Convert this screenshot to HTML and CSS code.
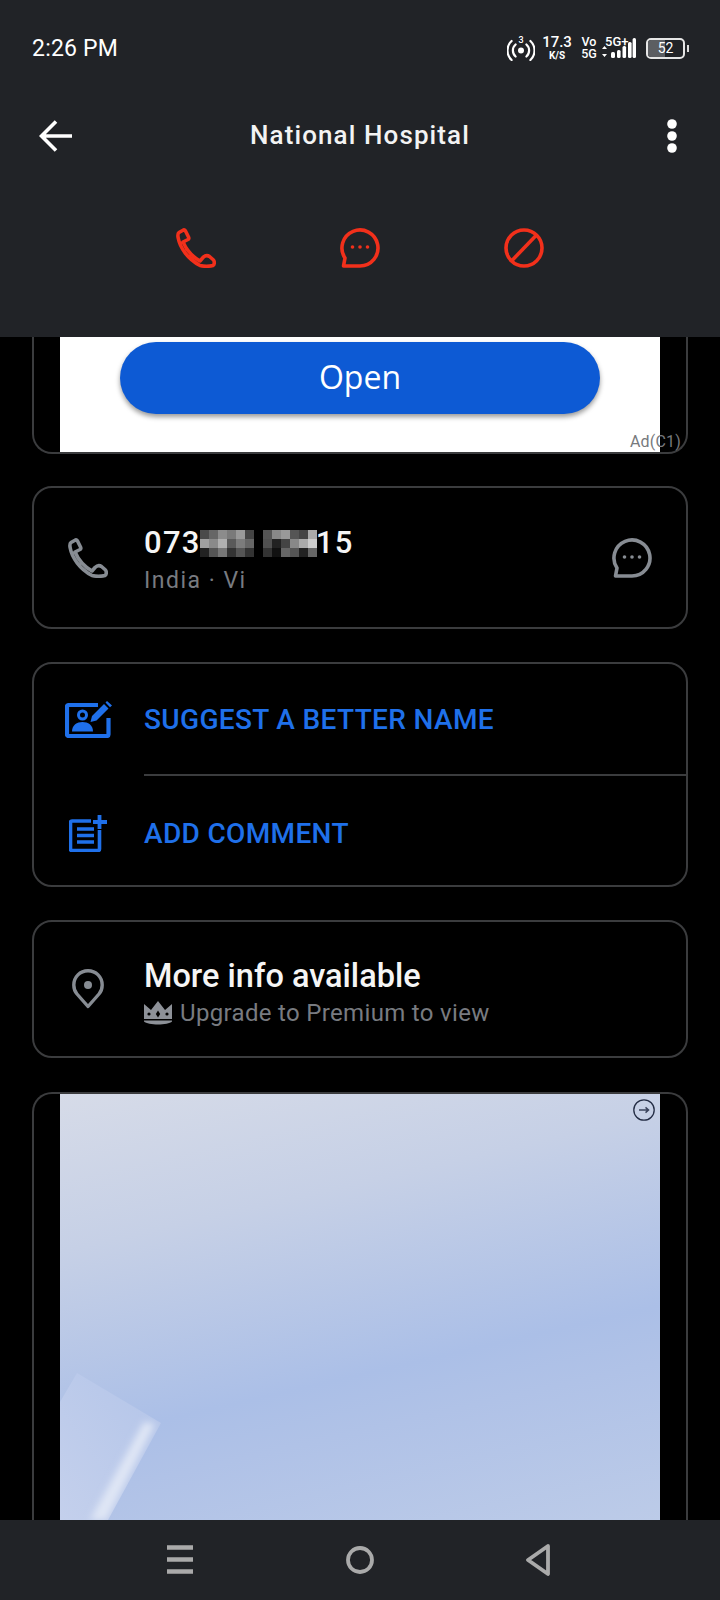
FILE: index.html
```html
<!DOCTYPE html>
<html lang="en">
<head>
<meta charset="utf-8">
<title>National Hospital</title>
<link rel="stylesheet" href="styles.css">
</head>
<body>
<svg class="defs" width="0" height="0" aria-hidden="true">
  <symbol id="i-phone" viewBox="0 0 40 40"><path d="M7 2.2 L3 4.5 C1.5 5.5 1.8 8 2.2 10 C4 20 12 31 24 37.5 C28 38.5 33 38.5 37 37.5 C38.6 36.5 38.6 33.5 37.5 32 L33.5 28.5 C31.5 27 29 27.5 27 29.5 L24 33 C16 28.5 10 21 7 14 L12 11.5 C13 11 13 10 12.5 9 L9.5 3 C9 2 8 1.6 7 2.2 Z" fill="none" stroke="currentColor" stroke-width="3.6" stroke-linejoin="round"/></symbol>
  <symbol id="i-msg" viewBox="0 0 40 40"><path d="M3.5 38 L5 30 A18 18 0 1 1 20 38 Z" fill="none" stroke="currentColor" stroke-width="3.6" stroke-linejoin="round"/><circle cx="12.5" cy="19" r="1.8" fill="currentColor"/><circle cx="20" cy="19" r="1.8" fill="currentColor"/><circle cx="27.5" cy="19" r="1.8" fill="currentColor"/></symbol>
</svg>

<div class="screen">
  <header class="head">
    <div class="status">
      <span class="time">2:26 PM</span>
      <div class="sys">
        <svg class="hotspot" viewBox="0 0 28 26" width="28" height="26"><circle cx="14" cy="15.5" r="3" fill="#fff"/><path d="M8.6 9.5 A8 8 0 0 0 8.6 21.5 M19.4 9.5 A8 8 0 0 1 19.4 21.5 M4.6 6 A13 13 0 0 0 4.6 25 M23.4 6 A13 13 0 0 1 23.4 25" fill="none" stroke="#fff" stroke-width="2.2" stroke-linecap="round"/><text x="14" y="7.5" class="hot-3">3</text></svg>
        <div class="speed"><span class="speed-n">17.3</span><span class="speed-u">K/S</span></div>
        <div class="volte"><span>Vo</span><span>5G</span></div>
        <div class="net">
          <span class="net-l">5G+</span>
          <svg class="bars" viewBox="0 0 34 20" width="34" height="20"><path d="M2.5 8 L0 11 H5 Z M2.5 19 L0 16 H5 Z" fill="#fff"/><rect x="9" y="14" width="4" height="6" rx="1.5" fill="#fff"/><rect x="15" y="12" width="3.6" height="8" rx="1.5" fill="#fff"/><rect x="20.5" y="8" width="3.6" height="12" rx="1.5" fill="#fff"/><rect x="26" y="4" width="3.6" height="16" rx="1.5" fill="#fff"/><rect x="30.6" y="0" width="3.4" height="20" rx="1.5" fill="#fff"/></svg>
        </div>
        <div class="batt"><span class="batt-fill"></span><span class="batt-n">52</span></div>
        <span class="batt-nub"></span>
      </div>
    </div>
    <div class="bar">
      <svg class="back" viewBox="0 0 34 32" width="34" height="32"><path d="M33 16 H3 M17 1.5 L2.5 16 L17 30.5" fill="none" stroke="#fff" stroke-width="3.6"/></svg>
      <h1 class="title">National Hospital</h1>
      <svg class="more" viewBox="0 0 10 34" width="10" height="34"><circle cx="5" cy="5" r="4.8" fill="#fff"/><circle cx="5" cy="17" r="4.8" fill="#fff"/><circle cx="5" cy="29" r="4.8" fill="#fff"/></svg>
    </div>
    <div class="actions">
      <svg class="act" width="40" height="40"><use href="#i-phone"/></svg>
      <svg class="act" width="40" height="40"><use href="#i-msg"/></svg>
      <svg class="act" viewBox="0 0 40 40" width="40" height="40"><circle cx="20" cy="20" r="18" fill="none" stroke="currentColor" stroke-width="3.6"/><path d="M7.5 33 L32.5 7" stroke="currentColor" stroke-width="3.6"/></svg>
    </div>
  </header>

  <main class="feed">
    <section class="card card-ad-top">
      <div class="ad-white">
        <button class="open">Open</button>
      </div>
      <span class="ad-tag">Ad(C1)</span>
    </section>

    <section class="card row row-num">
      <div class="ico"><svg class="gray" width="40" height="40"><use href="#i-phone"/></svg></div>
      <div class="txt txt-num">
        <div class="num">
          <span>073</span>
          <svg class="pix" viewBox="0 0 13 3" width="117" height="27" shape-rendering="crispEdges">
            <rect x="0" y="0" width="1" height="1" fill="#4a4a4a"/><rect x="1" y="0" width="1" height="1" fill="#666"/><rect x="2" y="0" width="1" height="1" fill="#8c8c8c"/><rect x="3" y="0" width="1" height="1" fill="#7a7a7a"/><rect x="4" y="0" width="1" height="1" fill="#999"/><rect x="5" y="0" width="1" height="1" fill="#444"/><rect x="7" y="0" width="1" height="1" fill="#555"/><rect x="8" y="0" width="1" height="1" fill="#888"/><rect x="9" y="0" width="1" height="1" fill="#999"/><rect x="10" y="0" width="1" height="1" fill="#555"/><rect x="11" y="0" width="1" height="1" fill="#444"/><rect x="12" y="0" width="1" height="1" fill="#aaa"/>
            <rect x="0" y="1" width="1" height="1" fill="#a0a0a0"/><rect x="1" y="1" width="1" height="1" fill="#8a8a8a"/><rect x="2" y="1" width="1" height="1" fill="#b0b0b0"/><rect x="3" y="1" width="1" height="1" fill="#5a5a5a"/><rect x="4" y="1" width="1" height="1" fill="#7c7c7c"/><rect x="5" y="1" width="1" height="1" fill="#666"/><rect x="7" y="1" width="1" height="1" fill="#505050"/><rect x="8" y="1" width="1" height="1" fill="#222"/><rect x="9" y="1" width="1" height="1" fill="#444"/><rect x="10" y="1" width="1" height="1" fill="#888"/><rect x="11" y="1" width="1" height="1" fill="#aaa"/><rect x="12" y="1" width="1" height="1" fill="#ccc"/>
            <rect x="0" y="2" width="1" height="1" fill="#222"/><rect x="1" y="2" width="1" height="1" fill="#555"/><rect x="2" y="2" width="1" height="1" fill="#777"/><rect x="3" y="2" width="1" height="1" fill="#333"/><rect x="4" y="2" width="1" height="1" fill="#555"/><rect x="5" y="2" width="1" height="1" fill="#333"/><rect x="7" y="2" width="1" height="1" fill="#333"/><rect x="8" y="2" width="1" height="1" fill="#111"/><rect x="9" y="2" width="1" height="1" fill="#666"/><rect x="10" y="2" width="1" height="1" fill="#555"/><rect x="11" y="2" width="1" height="1" fill="#222"/><rect x="12" y="2" width="1" height="1" fill="#666"/>
          </svg>
          <span>15</span>
        </div>
        <div class="sub">India · Vi</div>
      </div>
      <svg class="gray msg-end" width="40" height="40"><use href="#i-msg"/></svg>
    </section>

    <section class="card list">
      <div class="row row-link row-first">
        <div class="ico"><svg class="blue" viewBox="0 0 47 37" width="47" height="37"><path d="M33 4 H3.5 C2.6 4 2 4.6 2 5.5 V33.5 C2 34.4 2.6 35 3.5 35 H42 C42.9 35 43.5 34.4 43.5 33.5 V17" fill="none" stroke="currentColor" stroke-width="4.2"/><circle cx="17.5" cy="14" r="4" fill="none" stroke="currentColor" stroke-width="3"/><path d="M7 30.5 C7 24 12 21 17.5 21 C23 21 28 24 28 30.5 Z" fill="currentColor"/><path d="M25.5 21 L27 15 L39 3 L43.5 7.5 L31.5 19.5 Z M40.5 1.5 L42 0 L47 4.5 L45 6.2 Z" fill="currentColor"/></svg></div>
        <span class="link">SUGGEST A BETTER NAME</span>
      </div>
      <div class="divider"></div>
      <div class="row row-link row-last">
        <div class="ico"><svg class="blue" viewBox="0 0 38 37" width="38" height="37"><path d="M22 6 H3 C2 6 1.5 6.6 1.5 7.5 V34 C1.5 35 2 35.5 3 35.5 H29 C30 35.5 30.5 35 30.5 34 V15" fill="none" stroke="currentColor" stroke-width="3.6"/><path d="M8 14 H25 M8 20.5 H25 M8 27 H25" stroke="currentColor" stroke-width="3.6"/><path d="M30.5 0 V14 M24 7 H38" stroke="currentColor" stroke-width="3.8"/></svg></div>
        <span class="link">ADD COMMENT</span>
      </div>
    </section>

    <section class="card row row-info">
      <div class="ico"><svg class="gray" viewBox="0 0 32 40" width="32" height="40"><path d="M16 37.5 L5 25 C2.8 22.5 1.8 19.5 1.8 16 C1.8 8 8 1.8 16 1.8 C24 1.8 30.2 8 30.2 16 C30.2 19.5 29.2 22.5 27 25 Z" fill="none" stroke="currentColor" stroke-width="3.4" stroke-linejoin="round"/><circle cx="16" cy="16" r="4" fill="currentColor"/></svg></div>
      <div class="txt txt-info">
        <div class="info-h">More info available</div>
        <div class="info-s">
          <svg class="crown" viewBox="0 0 28 24" width="28" height="24"><path d="M0 3 L7 9 L14 0 L21 9 L28 3 V18 H0 Z" fill="currentColor"/><circle cx="5" cy="13" r="1.6" fill="#000"/><path d="M14 9.5 L16.2 13 L14 16.5 L11.8 13 Z" fill="#000"/><circle cx="23" cy="13" r="1.6" fill="#000"/><path d="M0 19.5 H28 V20.5 C24 24.5 4 24.5 0 20.5 Z" fill="currentColor"/></svg>
          <span>Upgrade to Premium to view</span>
        </div>
      </div>
    </section>

    <section class="card card-ad-big">
      <div class="ad-img">
        <svg class="ad-go" viewBox="0 0 22 22" width="22" height="22"><circle cx="11" cy="11" r="10.2" fill="none" stroke="#232c44" stroke-width="1.3"/><path d="M6 11 H15.5 M12.5 8.4 L15.5 11 L12.5 13.6" fill="none" stroke="#3a435c" stroke-width="1.5"/></svg>
        <svg class="sticker" viewBox="0 0 102 148" width="102" height="148">
          <defs>
            <linearGradient id="sheet" x1="0" y1="1" x2="1" y2="0"><stop offset="0" stop-color="#c4d0ec"/><stop offset="1" stop-color="#b4c5e9"/></linearGradient>
            <clipPath id="edge"><polygon points="17,1 101,51 48,148 0,148 0,30"/></clipPath>
            <filter id="soft" x="-40%" y="-10%" width="180%" height="120%"><feGaussianBlur stdDeviation="3.6"/></filter>
          </defs>
          <polygon points="17,1 101,51 48,148 0,148 0,30" fill="url(#sheet)"/>
          <g clip-path="url(#edge)"><polygon points="84,50 95,52 46,148 30,148" fill="#dfe6f5" filter="url(#soft)"/></g>
        </svg>
      </div>
    </section>
  </main>

  <nav class="nav">
    <svg viewBox="0 0 26 30" width="26" height="30"><path d="M0 2.5 H26 M0 14.5 H26 M0 26.5 H26" stroke="#aaa" stroke-width="4.4"/></svg>
    <svg viewBox="0 0 28 28" width="28" height="28"><circle cx="14" cy="14" r="12" fill="none" stroke="#aaa" stroke-width="3.8"/></svg>
    <svg viewBox="0 0 24 32" width="24" height="32"><path d="M22 2 L2 16 L22 30 Z" fill="none" stroke="#aaa" stroke-width="3.8" stroke-linejoin="round"/></svg>
  </nav>
</div>
</body>
</html>
```
FILE: styles.css
```css
* { box-sizing: border-box; }
html, body { margin: 0; padding: 0; background: #000; }
body { font-family: Roboto, "Liberation Sans", sans-serif; }
.defs { position: absolute; }

.screen { width: 720px; height: 1600px; display: flex; flex-direction: column; overflow: hidden; background: #000; }

.head { height: 337px; flex: none; background: #212327; color: #fff; display: flex; flex-direction: column; }

.status { height: 96px; padding: 0 32px; display: flex; align-items: center; justify-content: space-between; }
.time { font-size: 23px; letter-spacing: 0.2px; }
.sys { display: flex; align-items: center; margin-right: -1px; }
.hotspot { margin-right: 8px; }
.hot-3 { font: 500 9px Roboto, sans-serif; fill: #fff; text-anchor: middle; }
.speed { display: flex; flex-direction: column; align-items: center; line-height: 1; width: 28px; margin-right: 10px; }
.speed-n { font-size: 15px; font-weight: 500; }
.speed-u { font-size: 10px; font-weight: 700; margin-top: 1px; }
.volte { display: flex; flex-direction: column; align-items: center; font-size: 12.5px; font-weight: 500; line-height: 12px; margin-right: 5px; width: 16px; }
.net { display: flex; flex-direction: column; width: 34px; position: relative; height: 20px; margin-right: 10px; }
.net-l { position: absolute; left: 3px; top: -2px; font-size: 13px; font-weight: 500; line-height: 12px; }
.batt { width: 39px; height: 21px; border: 2px solid #e6e6e6; border-radius: 5px; position: relative; display: flex; align-items: center; justify-content: center; overflow: hidden; }
.batt-fill { position: absolute; left: 0; top: 0; bottom: 0; width: 17px; background: #5c5e62; }
.batt-n { position: relative; font-size: 14px; line-height: 1; }
.batt-nub { width: 2px; height: 7px; background: #ddd; margin-left: 2px; }

.bar { height: 80px; padding: 0 43px 0 39px; display: grid; grid-template-columns: 1fr auto 1fr; align-items: center; }
.back { margin-top: -1px; }
.title { margin: -2px 0 0; padding-left: 4px; font-size: 26px; font-weight: 500; letter-spacing: 1.1px; color: #f3f3f3; }
.more { justify-self: end; }

.actions { margin-top: 52px; display: flex; justify-content: center; gap: 124px; color: #f2301b; }
.act { display: block; }

.feed { flex: 1; min-height: 0; overflow: hidden; padding: 0 32px; display: flex; flex-direction: column; gap: 33px; }

.card { border: 2px solid #3b3c3e; border-radius: 20px; flex: none; }

.card-ad-top { height: 117px; margin-bottom: -1px; border-top: 0; border-top-left-radius: 0; border-top-right-radius: 0; padding: 0 26px; position: relative; }
.ad-white { height: 115px; background: #fff; padding-top: 5px; display: flex; justify-content: center; align-items: flex-start; }
.open { width: 480px; height: 72px; border: 0; border-radius: 36px; background: #0d5ad4; color: #fff; font: 400 32px "Open Sans", Roboto, sans-serif; box-shadow: 0 3px 5px rgba(0,0,0,.4); padding: 0 0 4px; }
.ad-tag { position: absolute; right: 5px; bottom: 0; font-size: 16px; letter-spacing: 0.2px; color: #77797d; line-height: 20px; }

.row { display: flex; align-items: center; }
.ico { width: 110px; flex: none; display: flex; justify-content: center; padding-right: 2px; }
.ico svg { display: block; }
.gray { color: #878c93; }
.blue { color: #1f70ea; }
.txt { flex: 1; min-width: 0; }
.txt-num { padding-top: 6px; }
.txt-info { padding-top: 7px; }

.row-num { height: 143px; padding-right: 34px; }
.num { display: flex; align-items: center; font-size: 31px; font-weight: 500; letter-spacing: 1.3px; color: #f5f5f5; line-height: 36px; }
.pix { display: block; margin-left: -1px; margin-right: -1px; }
.sub { font-size: 23px; letter-spacing: 1.5px; color: #787b80; line-height: 30px; margin-top: 5px; }
.msg-end { flex: none; }

.list { height: 225px; display: flex; flex-direction: column; }
.row-first { height: 110px; flex: none; padding-top: 1px; }
.row-last { flex: 1; padding-top: 5px; }
.link { font-size: 28px; font-weight: 500; letter-spacing: 0.35px; color: #1f70ea; }
.divider { height: 2px; margin-left: 110px; background: #3b3c3e; flex: none; }

.row-info { height: 138px; }
.info-h { font-size: 32.5px; font-weight: 500; color: #f5f5f5; line-height: 36px; }
.info-s { display: flex; align-items: center; gap: 8px; font-size: 24px; letter-spacing: 0.33px; color: #787b80; line-height: 30px; margin-top: 4px; }
.crown { color: #8d9198; display: block; }

.card-ad-big { height: 500px; border-bottom: 0; padding: 0 26px; margin-top: 1px; }
.ad-img { height: 426px; position: relative; overflow: hidden; background: linear-gradient(167deg, #d6dbe8 0%, #c6d0e6 28%, #abbfe7 62%, #b0c2e7 72%, #bccbe8 100%); }
.ad-go { position: absolute; right: 5px; top: 5px; }
.sticker { position: absolute; left: 0; bottom: 0; }

.nav { height: 80px; flex: none; background: #212327; display: flex; align-items: center; justify-content: center; padding-right: 3px; }
.nav svg { display: block; }
.nav svg:nth-child(1) { margin-right: 153px; }
.nav svg:nth-child(2) { margin-right: 152px; }
```
